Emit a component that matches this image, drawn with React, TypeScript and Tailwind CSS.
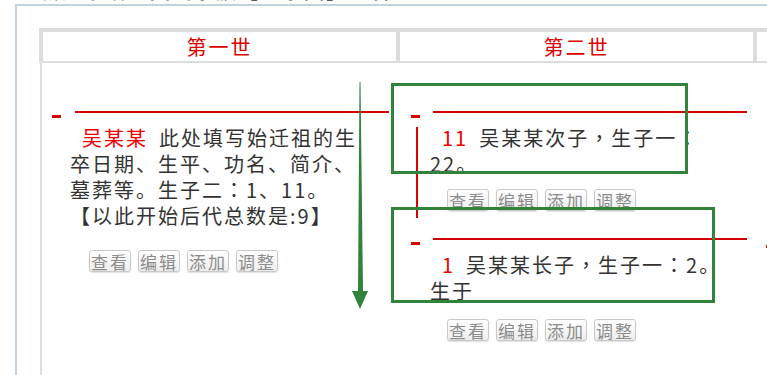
import React from "react";

const Buttons = ({ className }: { className: string }) => {
  const labels = ["查看", "编辑", "添加", "调整"];
  return (
    <div className={`flex gap-[7px] ${className}`}>
      {labels.map((label) => (
        <span
          key={label}
          className="flex h-[22px] w-[42px] items-center justify-center rounded-[3px] border border-[#c9c9c9] bg-linear-to-b from-white to-[#ededed] text-[17px] leading-none text-[#8c8c8c] shadow-[0_1px_1px_rgba(0,0,0,0.12)]"
        >
          {label}
        </span>
      ))}
    </div>
  );
};

// centred full-width punctuation, as the page's font draws it
const P = ({ ch }: { ch: string }) => <span className="font-['Noto_Sans_CJK_TC',sans-serif]">{ch}</span>;

// red "-" toggle plus the long red rule above each person
const NodeHead = ({ wide }: { wide?: boolean }) => (
  <div className="flex h-[21px] items-start">
    <span className={wide ? "ml-[11px] mt-[11px] h-[3px] w-[9px] bg-[#dd0000]" : "ml-[10px] mt-[11px] h-[3px] w-[9px] bg-[#dd0000]"} />
    <span className={wide ? "ml-[13px] mr-[10px] mt-[7px] h-[2px] flex-1 bg-[#d40000]" : "ml-[14px] mr-[11px] mt-[7px] h-[2px] flex-1 bg-[#d40000]"} />
  </div>
);

export default function App() {
  return (
    <div className="relative h-[375px] w-[767px] overflow-hidden bg-white font-['Noto_Sans_CJK_SC',sans-serif] text-[#333]">
      {/* title line, scrolled almost out of view */}
      <div className="h-[4px] overflow-hidden">
        <div className="-mt-[22px] pl-[40px] text-[20px] leading-[26px] tracking-[2px] whitespace-nowrap">
          新建家谱：吴氏宗族【世系图】查看
        </div>
      </div>

      <div className="ml-[15px] h-[371px] border-l-2 border-t-2 border-[#c3d3db] pl-[22px] pt-[22px]">
        <div className="w-[800px]">
          {/* generation header */}
          <div className="flex border-b-2 border-l-4 border-t-4 border-[#dddddd] text-center text-[20px] leading-[29px] tracking-[2px] text-[#dd0000]">
            <div className="h-[29px] w-[357px] border-r-4 border-[#dddddd]">第一世</div>
            <div className="h-[29px] w-[357px] border-r-4 border-[#dddddd]">第二世</div>
            <div className="h-[29px] flex-1" />
          </div>

          {/* tree body */}
          <div className="ml-[1px] flex h-[320px] border-l-2 border-[#dddddd] text-[20px] leading-[26px] tracking-[2px]">
            <div className="w-[358px] pt-[41px]">
              <NodeHead />
              <div className="w-[326px] pl-[28px]">
                <span className="ml-[12px] mr-[11px] text-[#ee0000]">吴某某</span>
                此处填写始迁祖的生卒日期、生平、功名、简介、墓葬等。生子二<P ch="：" />1、11。
                <br />
                【以此开始后代总数是:9】
              </div>
              <Buttons className="ml-[47px] mt-[21px]" />
            </div>

            <div className="relative w-[357px] pt-[41px]">
              <span className="absolute left-[16px] top-[64px] h-[91px] w-[2px] bg-[#dd0000]" />
              <NodeHead wide />
              <div className="w-[328px] pl-[30px]">
                <span className="ml-[12px] mr-[11px] text-[#ee0000]">11</span>
                吴某某次子<P ch="，" />生子一<P ch="：" />22。
              </div>
              <Buttons className="ml-[47px] mt-[12px]" />

              <div className="mt-[20px]">
                <NodeHead wide />
                <div className="w-[328px] pl-[30px]">
                  <span className="ml-[12px] mr-[11px] text-[#ee0000]">1</span>
                  吴某某长子<P ch="，" />生子一<P ch="：" />2。生于
                </div>
                <Buttons className="ml-[47px] mt-[15px]" />
              </div>
            </div>

            <div className="relative flex-1">
              <span className="absolute left-[9px] top-[182px] h-[3px] w-[9px] bg-[#dd0000]" />
            </div>
          </div>
        </div>
      </div>

      {/* green annotation marks drawn over the page */}
      <svg className="pointer-events-none absolute inset-0" width="767" height="375" viewBox="0 0 767 375">
        <rect x="392.5" y="84.5" width="294" height="88" fill="none" stroke="#31823a" strokeWidth="3" />
        <rect x="392.5" y="208.5" width="321" height="93" fill="none" stroke="#31823a" strokeWidth="3" />
        <polygon points="359.5,82 360.5,82 363,292 358,292" fill="#31823a" />
        <polygon points="352,291 368,291 360,309" fill="#31823a" />
      </svg>
    </div>
  );
}
